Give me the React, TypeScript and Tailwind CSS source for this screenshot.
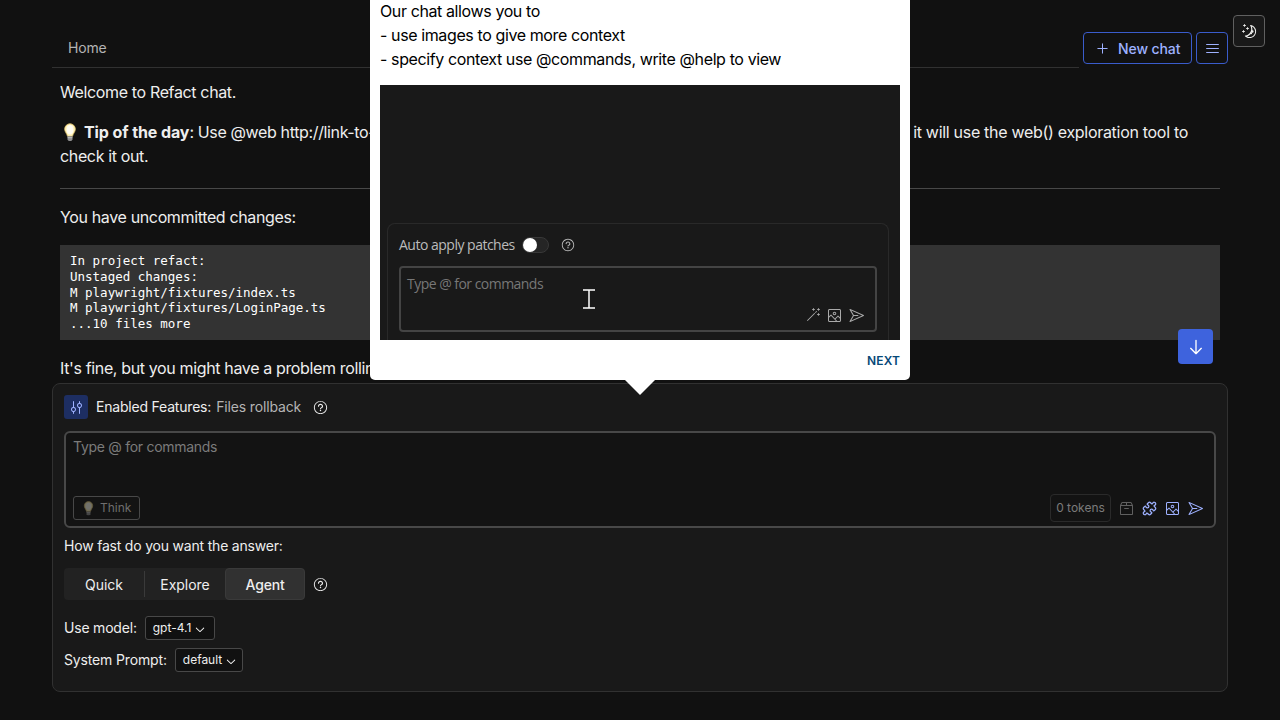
import type { ReactNode } from "react";
import {
  RxPlus, RxHamburgerMenu, RxMixerVertical, RxQuestionMarkCircled, RxArchive,
  RxImage, RxPaperPlane, RxChevronDown, RxMagicWand, RxArrowDown, RxMoon,
} from "react-icons/rx";

function Bulb({ className }: { className: string }) {
  return (
    <svg viewBox="0 0 16 20" className={className}>
      <path d="M8 .8a5.600 5.600 0 0 0-5.600 5.600c0 3 2.300 4.600 3 7.600h5.200c.7-3 3-4.600 3-7.600A5.600 5.600 0 0 0 8 .8z" fill="#fff3bd" stroke="#dfc470" strokeWidth=".9" />
      <ellipse cx="8" cy="7" rx="3.500" ry="4.800" fill="#fffdf2" />
      <path d="M5.400 14h5.200v3.500L9.300 19H6.700l-1.300-1.500z" fill="#8d8d8d" />
      <path d="M5.400 15.500h5.200" stroke="#d5d5d5" strokeWidth=".8" />
    </svg>
  );
}

function PuzzleIcon() {
  return (
    <svg viewBox="0 0 24 24" className="size-[15px]" fill="none" stroke="currentColor" strokeWidth="2" strokeLinejoin="round" strokeLinecap="round">
      <path d="M15.390 4.390a1 1 0 0 0 1.680-.474 2.500 2.500 0 1 1 3.014 3.015 1 1 0 0 0-.474 1.680l1.683 1.682a2.414 2.414 0 0 1 0 3.414L19.610 15.390a1 1 0 0 1-1.680-.474 2.500 2.500 0 1 0-3.014 3.015 1 1 0 0 1 .474 1.680l-1.683 1.682a2.414 2.414 0 0 1-3.414 0L8.610 19.610a1 1 0 0 0-1.680.474 2.500 2.500 0 1 1-3.014-3.015 1 1 0 0 0 .474-1.680l-1.683-1.682a2.414 2.414 0 0 1 0-3.414L4.390 8.610a1 1 0 0 1 1.680.474 2.500 2.500 0 1 0 3.014-3.015 1 1 0 0 1-.474-1.680l1.683-1.682a2.414 2.414 0 0 1 3.414 0z" />
    </svg>
  );
}

function SelectBox({ children, width }: { children: ReactNode; width: string }) {
  return (
    <button className={`flex h-6 items-center rounded-[3px] border border-[#484848] bg-[#111] pl-[7px] text-xs tracking-normal text-[#eee] ${width}`}>
      {children}
      <RxChevronDown className="mt-0.5 ml-[2px] size-[14px] shrink-0" />
    </button>
  );
}

function Header() {
  return (
    <header className="ml-[52px] mr-[52px] flex h-[68px] shrink-0 items-start">
      <div className="flex h-[68px] w-[1027px] items-end border-b border-[#313131] pb-[9px] pl-4">
        <span className="text-sm leading-5 tracking-[-0.2px] text-[#b4b4b4]">Home</span>
      </div>
      <button className="mt-8 ml-1 flex h-8 w-[109px] items-center rounded-[4px] border border-[#3a5ccc] pl-[11px] text-sm font-medium text-[#9eb1ff]">
        <RxPlus className="size-[15px]" />
        <span className="mt-px ml-2 tracking-[-0.1px]">New chat</span>
      </button>
      <button className="mt-8 ml-1 flex size-8 items-center justify-center rounded-[4px] border border-[#3a5ccc] text-[#9eb1ff]">
        <RxHamburgerMenu className="size-[15px]" />
      </button>
    </header>
  );
}

function Messages() {
  return (
    <main className="mx-[60px] flex h-[315px] flex-col overflow-hidden text-base leading-6 tracking-[-0.36px] text-[#eee]">
      <p className="mt-3">Welcome to Refact chat.</p>
      <div className="mt-4 flex justify-between">
        <p className="flex items-center whitespace-pre">
          <Bulb className="mr-[6px] ml-[2px] h-[19px] w-4" />
          <b className="tracking-[-0.1px]">Tip of the day</b>: Use @web http://link-to-page
        </p>
        <p className="mr-8 tracking-[-0.3px]">it will use the web() exploration tool to</p>
      </div>
      <p>check it out.</p>
      <hr className="mt-5 border-[#484848]" />
      <p className="mt-4">You have uncommitted changes:</p>
      <pre className="mt-4 h-[95px] shrink-0 bg-[#333] px-[10px] pt-2 font-['DejaVu_Sans_Mono',monospace] text-[12.500px] leading-[15.800px] tracking-normal text-white">{`In project refact:
Unstaged changes:
M playwright/fixtures/index.ts
M playwright/fixtures/LoginPage.ts
...10 files more`}</pre>
      <p className="mt-4">It's fine, but you might have a problem rolling back</p>
    </main>
  );
}

function Composer() {
  return (
    <section className="mx-[52px] flex h-[309px] flex-col rounded-lg border border-[#313131] bg-[#191919] px-[11px] pt-[11px] text-sm tracking-[-0.2px] text-[#eee]">
      <div className="flex h-6 items-center">
        <span className="flex size-6 items-center justify-center rounded-[3px] bg-[#1d2e62] text-[#9eb1ff]"><RxMixerVertical className="size-[15px]" /></span>
        <span className="ml-2">Enabled Features:</span>
        <span className="ml-[5px] tracking-[-0.150px] text-[#b4b4b4]">Files rollback</span>
        <RxQuestionMarkCircled className="ml-3 size-[15px]" />
      </div>
      <div className="mt-3 flex h-[97px] flex-col justify-between rounded-md border-2 border-[#484848] bg-[#131313] pt-1 pr-[11px] pb-1 pl-[7px]">
        <p className="leading-5 tracking-[-0.280px] text-[#7b7b7b]">Type @ for commands</p>
        <div className="flex h-7 items-center tracking-normal text-[#9eb1ff]">
          <button className="flex h-6 w-[67px] items-center rounded-[3px] border border-[#484848] pl-2 text-xs text-[#6e6e6e]">
            <Bulb className="mr-[5px] h-[15px] w-[13px] opacity-40" />Think
          </button>
          <span className="ml-auto flex h-7 w-[61px] items-center justify-center rounded-[4px] border border-[#2a2a2a] text-xs text-[#7b7b7b]">0 tokens</span>
          <RxArchive className="ml-2 size-[15px] text-[#606060]" />
          <span className="ml-2"><PuzzleIcon /></span>
          <RxImage className="ml-2 size-[15px]" />
          <RxPaperPlane className="ml-2 size-[15px]" />
        </div>
      </div>
      <p className="mt-2 leading-5">How fast do you want the answer:</p>
      <div className="mt-3 flex h-8 items-center">
        <div className="flex h-8 w-[241px] items-center rounded-[4px] bg-[#222] tracking-[-0.050px]">
          <span className="flex h-[26px] w-[81px] items-center justify-center border-r border-[#3a3a3a] pt-[2px]">Quick</span>
          <span className="flex w-20 items-center justify-center pt-[2px]">Explore</span>
          <span className="flex h-8 w-20 items-center justify-center rounded-[4px] border border-[#3a3a3a] bg-[#313131] pt-[2px] font-medium tracking-[-0.200px]">Agent</span>
        </div>
        <RxQuestionMarkCircled className="ml-2 size-[15px]" />
      </div>
      <div className="mt-4 flex items-center gap-2">Use model: <SelectBox width="w-[70px]">gpt-4.1</SelectBox></div>
      <div className="mt-2 flex items-center gap-2 tracking-[-0.150px]">System Prompt: <SelectBox width="w-[68px]">default</SelectBox></div>
    </section>
  );
}

function TourPopover() {
  return (
    <div className="absolute top-0 left-[370px] h-[395px] w-[540px]">
      <div className="flex h-[380px] flex-col rounded-b-[5px] bg-white px-[10px] text-base leading-6 tracking-[-0.390px] text-black">
        <div className="-mt-px">
          <p>Our chat allows you to</p>
          <p>- use images to give more context</p>
          <p>- specify context use @commands, write @help to view</p>
        </div>
        <div className="mt-[14px] flex h-[255px] flex-col justify-end overflow-hidden bg-[#191919] pl-[7px] text-[#bbb]">
          <div className="h-[117px] w-[502px] rounded-t-lg border border-b-0 border-[#292929] px-[11px] pt-[11px]">
            <div className="flex h-5 items-center font-['Open_Sans',sans-serif] text-sm tracking-[-0.500px]">
              Auto apply patches
              <span className="ml-[7px] flex h-4 w-[27px] items-center rounded-full border border-[#383838] bg-[#252525]"><i className="size-[14px] rounded-full bg-white" /></span>
              <RxQuestionMarkCircled className="ml-3 size-[14px]" />
            </div>
            <div className="mt-[11px] flex h-[66px] w-[478px] flex-col justify-between rounded-[4px] border-2 border-[#444] px-[6px] pt-[6px] pb-[7px]">
              <div className="flex h-5 items-start font-['Open_Sans',sans-serif] text-sm leading-5 tracking-[-0.530px] text-[#777]">
                Type @ for commands
                <svg viewBox="0 0 12 20" className="mt-[15px] ml-10 h-5 w-3" fill="none" stroke="#fff" strokeWidth="1.500"><path d="M0 1h12M0 19h12M6 1v18" /></svg>
              </div>
              <div className="flex justify-end gap-[7px] pr-[5px] text-[#aaa]"><RxMagicWand className="size-[15px]" /><RxImage className="size-[15px]" /><RxPaperPlane className="size-[15px]" /></div>
            </div>
          </div>
        </div>
        <button className="mt-[11px] self-end text-xs leading-5 font-semibold tracking-[0.01em] text-[#064878]">NEXT</button>
      </div>
      <svg viewBox="0 0 30 15" className="mx-auto h-[15px] w-[30px]"><path d="M0 0h30L15 15z" fill="#fff" /></svg>
    </div>
  );
}

export default function App() {
  return (
    <div className="relative flex h-[720px] w-[1280px] flex-col overflow-hidden bg-[#111] font-['Inter',sans-serif]">
      <Header />
      <Messages />
      <Composer />
      <button className="absolute top-[15px] left-[1233px] flex size-8 items-center justify-center rounded-[4px] border border-[#606060] bg-[#191919] text-[#eeeeec]"><RxMoon className="size-[15px]" /></button>
      <button className="absolute top-[329px] left-[1178px] flex size-[35px] items-center justify-center rounded-[4px] bg-[#3e63dd] text-white"><RxArrowDown className="size-5" /></button>
      <TourPopover />
    </div>
  );
}
